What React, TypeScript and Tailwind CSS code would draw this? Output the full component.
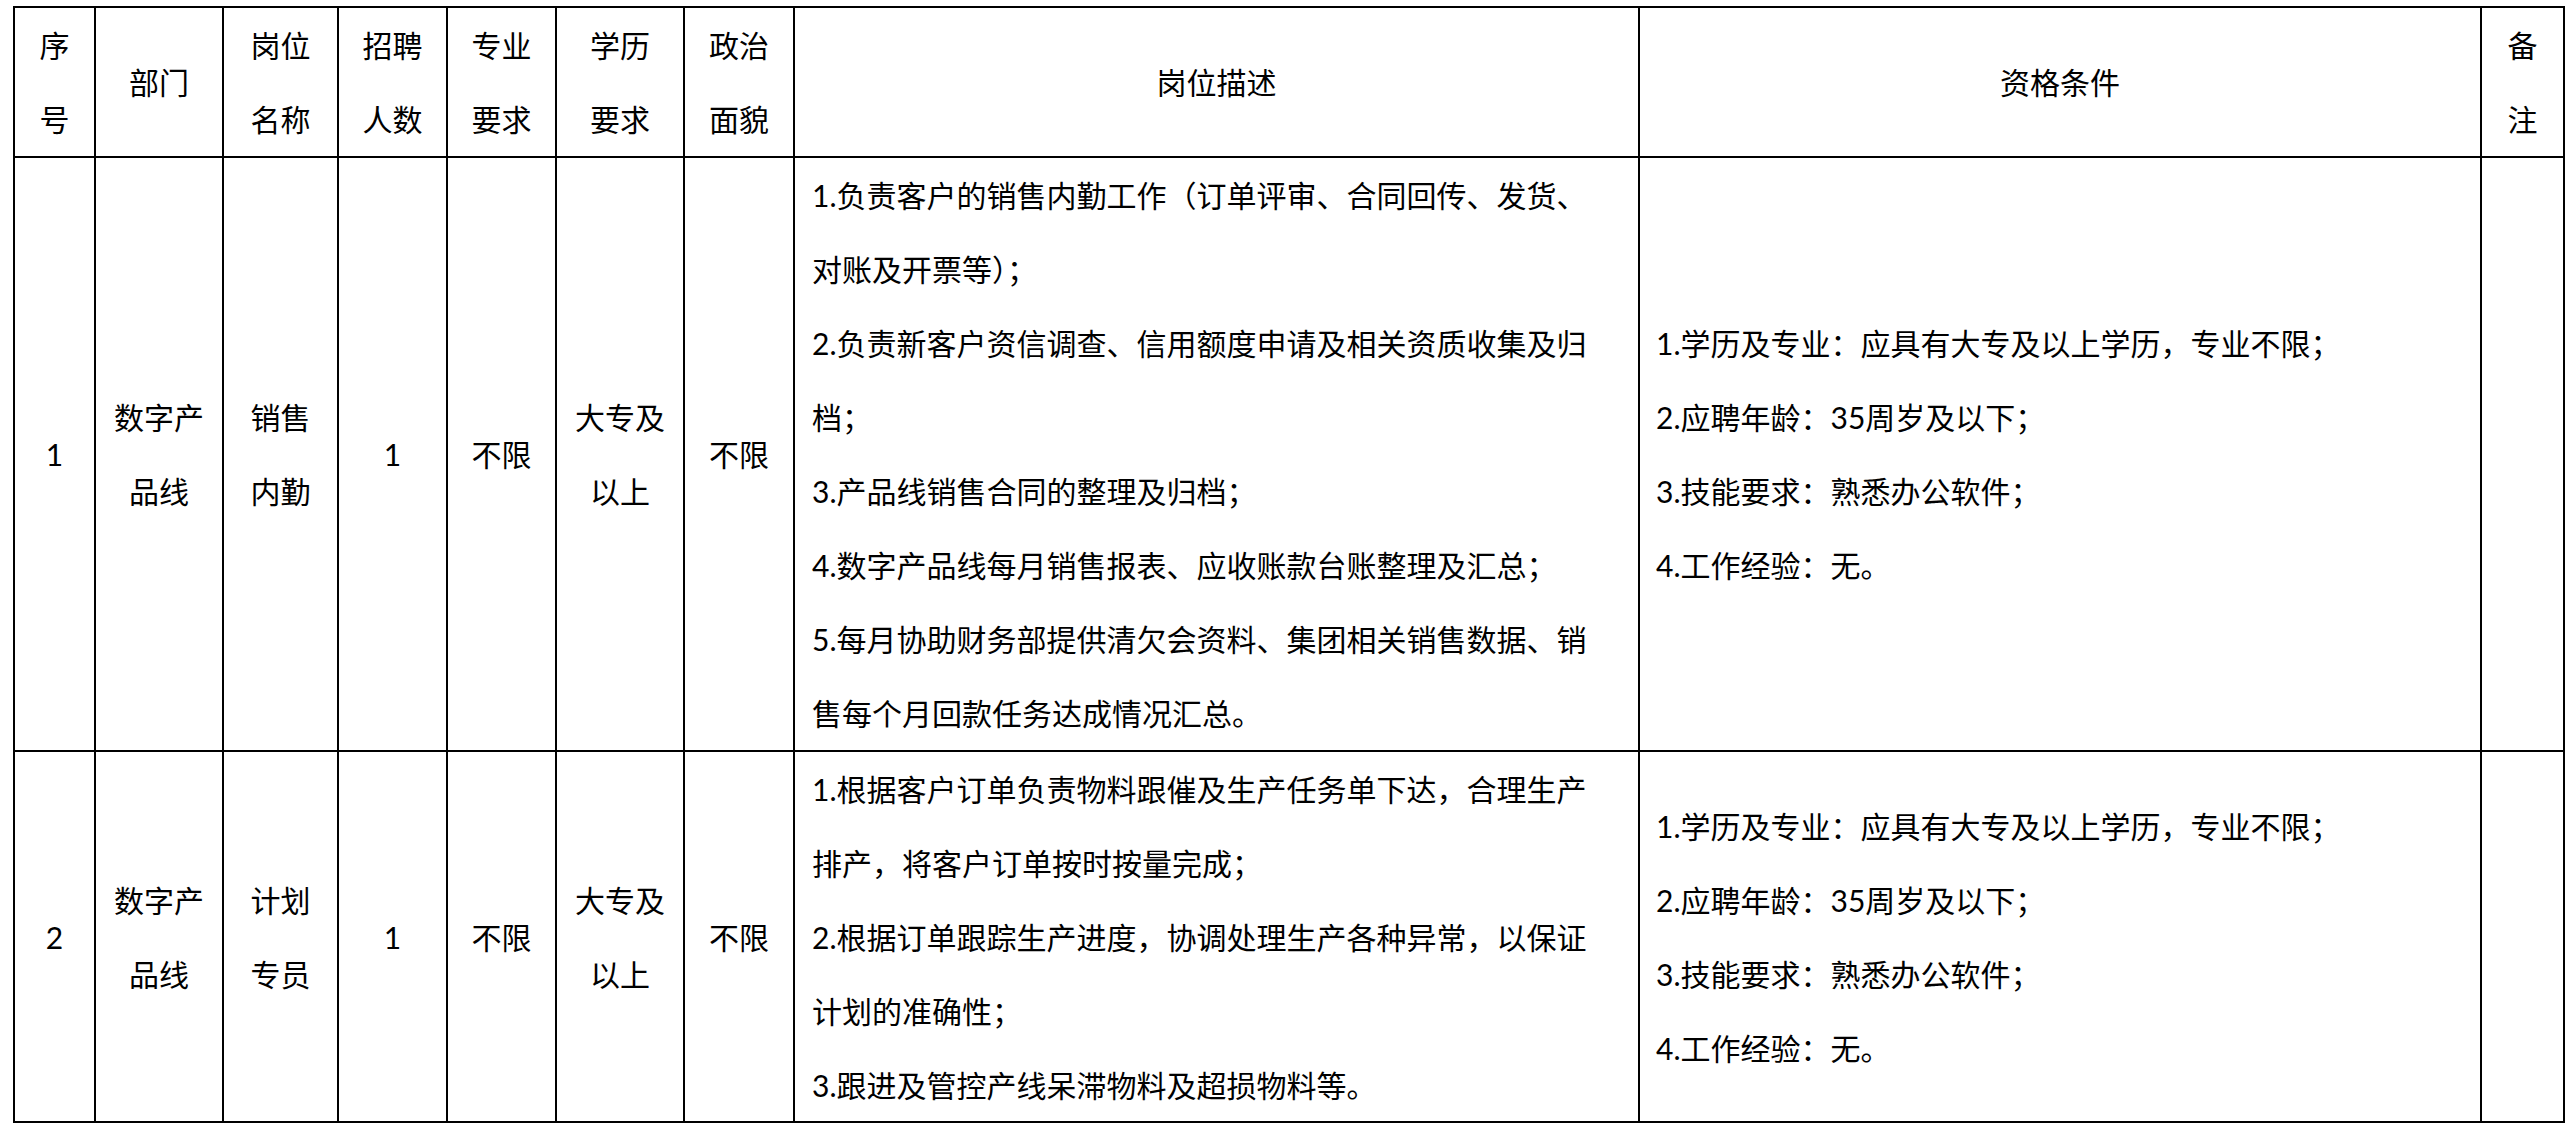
import React from "react";

type Row = {
  no: string;
  dept: string[];
  title: string[];
  count: string;
  major: string;
  edu: string[];
  politics: string;
  desc: string[];
  reqs: string[];
};

const headers: string[][] = [
  ["序", "号"],
  ["部门"],
  ["岗位", "名称"],
  ["招聘", "人数"],
  ["专业", "要求"],
  ["学历", "要求"],
  ["政治", "面貌"],
  ["岗位描述"],
  ["资格条件"],
  ["备", "注"],
];

const reqs = [
  "1.学历及专业：应具有大专及以上学历，专业不限；",
  "2.应聘年龄：35周岁及以下；",
  "3.技能要求：熟悉办公软件；",
  "4.工作经验：无。",
];

const rows: Row[] = [
  {
    no: "1",
    dept: ["数字产", "品线"],
    title: ["销售", "内勤"],
    count: "1",
    major: "不限",
    edu: ["大专及", "以上"],
    politics: "不限",
    desc: [
      "1.负责客户的销售内勤工作（订单评审、合同回传、发货、",
      "对账及开票等）；",
      "2.负责新客户资信调查、信用额度申请及相关资质收集及归",
      "档；",
      "3.产品线销售合同的整理及归档；",
      "4.数字产品线每月销售报表、应收账款台账整理及汇总；",
      "5.每月协助财务部提供清欠会资料、集团相关销售数据、销",
      "售每个月回款任务达成情况汇总。",
    ],
    reqs,
  },
  {
    no: "2",
    dept: ["数字产", "品线"],
    title: ["计划", "专员"],
    count: "1",
    major: "不限",
    edu: ["大专及", "以上"],
    politics: "不限",
    desc: [
      "1.根据客户订单负责物料跟催及生产任务单下达，合理生产",
      "排产，将客户订单按时按量完成；",
      "2.根据订单跟踪生产进度，协调处理生产各种异常，以保证",
      "计划的准确性；",
      "3.跟进及管控产线呆滞物料及超损物料等。",
    ],
    reqs,
  },
];

const Center = ({ lines }: { lines: string[] }) => (
  <div className="bg-white flex flex-col items-center justify-center text-center">
    {lines.map((l, i) => (
      <div key={i} className="whitespace-nowrap">
        {l}
      </div>
    ))}
  </div>
);

const Left = ({ lines, pad }: { lines: string[]; pad: string }) => (
  <div className={`bg-white flex flex-col items-start justify-center ${pad}`}>
    {lines.map((l, i) => (
      <div key={i} className="whitespace-nowrap">
        {l}
      </div>
    ))}
  </div>
);

export default function App() {
  return (
    <div className="min-h-screen bg-white pt-[6px] pl-[13px] text-black font-['Lato','Noto_Sans_CJK_SC',sans-serif] text-[30px] leading-[74px]">
      <div className="grid w-fit gap-[2px] bg-black p-[2px] grid-cols-[79px_126px_113px_107px_107px_126px_108px_843px_840px_81px] grid-rows-[148px_592px_369px]">
        {headers.map((h, i) => (
          <Center key={i} lines={h} />
        ))}
        {rows.map((r) => (
          <React.Fragment key={r.no}>
            <Center lines={[r.no]} />
            <Center lines={r.dept} />
            <Center lines={r.title} />
            <Center lines={[r.count]} />
            <Center lines={[r.major]} />
            <Center lines={r.edu} />
            <Center lines={[r.politics]} />
            <Left lines={r.desc} pad="pl-[17px]" />
            <Left lines={r.reqs} pad="pl-[16px]" />
            <div className="bg-white" />
          </React.Fragment>
        ))}
      </div>
    </div>
  );
}
